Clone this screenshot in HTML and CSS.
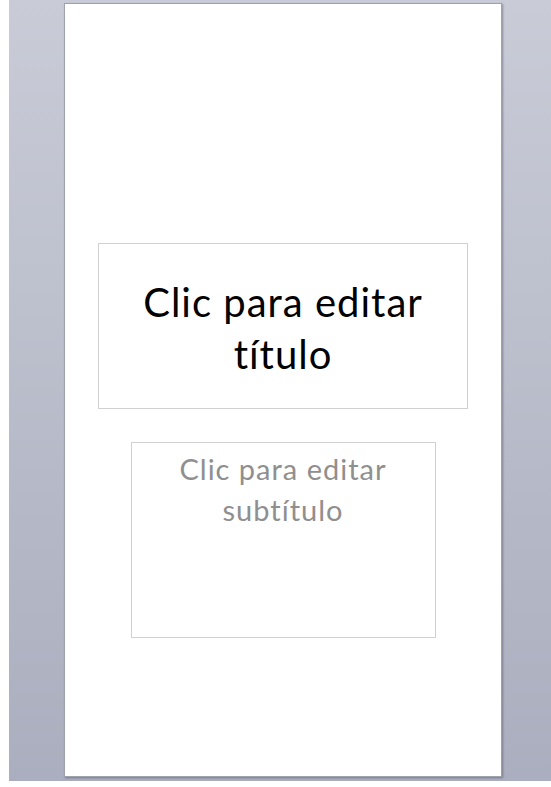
FILE: index.html
```html
<!DOCTYPE html>
<html lang="es">
  <head>
    <meta charset="UTF-8" />
    <meta name="viewport" content="width=device-width, initial-scale=1.0" />
    <title>Diapositiva</title>
    <link rel="stylesheet" href="styles.css">
  </head>
  <body>
    <div class="stage">
      <div class="slide">
        <div class="title-box">
          <h1>Clic para editar título</h1>
        </div>
        <div class="sub-box">
          <p>Clic para editar subtítulo</p>
        </div>
      </div>
    </div>
  </body>
</html>
```
FILE: styles.css
```css
* {
  margin: 0;
  padding: 0;
  box-sizing: border-box;
}
body {
  background: #fff;
  padding-left: 9px;
  font-family: Lato, "Open Sans", sans-serif;
}
.stage {
  height: 781px;
  background: linear-gradient(#c9ccd7, #aaaebe);
  padding-top: 3px;
  padding-left: 55px;
}
.slide {
  width: 438px;
  height: 774px;
  background: #fff;
  border: 1px solid #9ea2ad;
  box-shadow: 1px 1px 2px rgba(60, 64, 80, 0.45);
  display: flex;
  flex-direction: column;
  align-items: center;
  padding-top: 239px;
}
.title-box {
  width: 370px;
  height: 166px;
  border: 1px solid #d0d0d0;
  display: flex;
  align-items: center;
  justify-content: center;
  padding-top: 4px;
}
.title-box h1 {
  font-size: 40px;
  font-weight: 400;
  letter-spacing: 1px;
  line-height: 52px;
  color: #000;
  text-align: center;
  width: 320px;
}
.sub-box {
  width: 305px;
  height: 196px;
  margin-top: 33px;
  border: 1px solid #d0d0d0;
  padding-top: 5px;
}
.sub-box p {
  font-size: 29px;
  letter-spacing: 1px;
  line-height: 41px;
  color: #8f8f8f;
  text-align: center;
  width: 240px;
  margin: 0 auto;
}
```
